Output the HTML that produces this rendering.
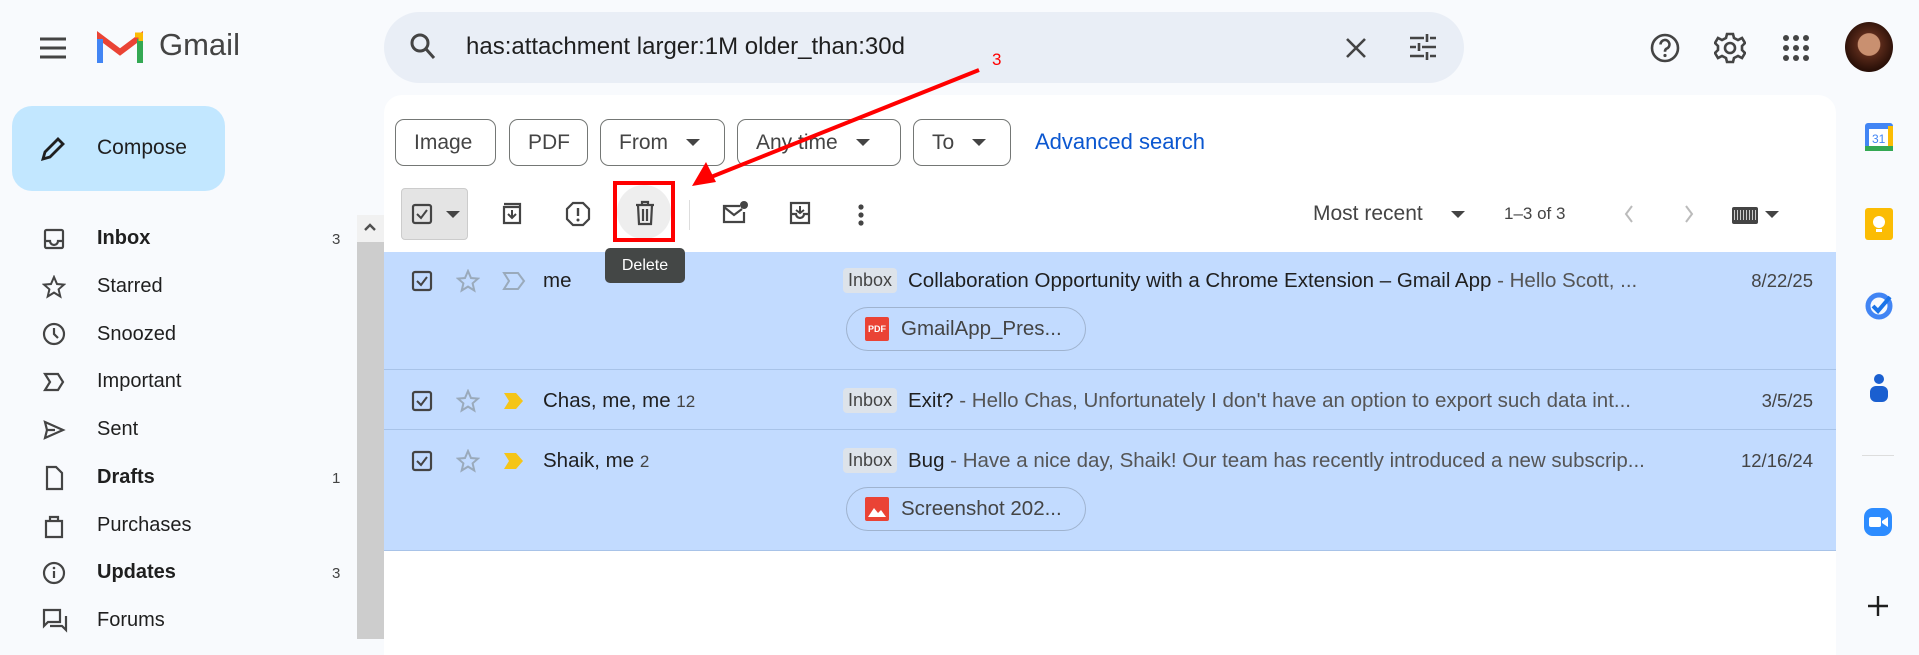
<!DOCTYPE html>
<html><head><meta charset="utf-8"><style>
*{margin:0;padding:0;box-sizing:border-box}
body{width:1919px;height:639px;overflow:hidden;background:#f8fafd;font-family:"Liberation Sans",Arial,sans-serif;color:#1f1f1f;position:relative}
.a{position:absolute}
svg{display:block}
.nav{position:absolute;left:97px;font-size:20px;color:#1f1f1f}
.nav.b{font-weight:bold}
.cnt{position:absolute;left:332px;font-size:15px;color:#444}
.ni{position:absolute;left:42px}
.chip{position:absolute;top:119px;height:47px;border:1px solid #747775;border-radius:9px;font-size:21px;color:#444;display:flex;align-items:center;padding-left:18px;gap:18px}
.tri{width:0;height:0;border-left:7px solid transparent;border-right:7px solid transparent;border-top:7px solid #444}
.row{position:absolute;left:384px;width:1452px;background:#c2dbff;border-bottom:1px solid #a8c3e8}
.t{position:absolute;font-size:20.5px;white-space:nowrap}
.lbl{position:absolute;left:843px;background:#dde3ea;color:#444;font-size:18px;padding:2px 5px;border-radius:4px}
.att{position:absolute;left:846px;width:240px;height:44px;border:1px solid #9fb3cf;border-radius:22px;font-size:20.5px;color:#444;display:flex;align-items:center;padding-left:18px;gap:12px}
</style></head><body>
<svg class="a" style="left:38px;top:36px" width="30" height="24"><path d="M2 3h26M2 12h26M2 21h26" stroke="#444" stroke-width="3"/></svg>
<svg class="a" style="left:97px;top:31px" width="46" height="34" viewBox="0 0 46 34"><path d="M3 32V6l20 15L43 6v26" fill="none" stroke="#ea4335" stroke-width="6"/><path d="M3 32V8" stroke="#4285f4" stroke-width="6"/><path d="M43 32V8" stroke="#34a853" stroke-width="6"/><path d="M38 4l6 0v6" stroke="#fbbc04" stroke-width="5" fill="none"/></svg>
<div class="a" style="left:159px;top:27px;font-size:31px;color:#444">Gmail</div>
<div class="a" style="left:384px;top:12px;width:1080px;height:71px;background:#e9eef6;border-radius:36px"></div>
<svg class="a" style="left:410px;top:33px" width="26" height="28"><circle cx="10" cy="10" r="8" fill="none" stroke="#444" stroke-width="3"/><path d="M16 16l8 9" stroke="#444" stroke-width="3"/></svg>
<div class="a" style="left:466px;top:33px;font-size:24px;color:#1f1f1f">has:attachment larger:1M older_than:30d</div>
<svg class="a" style="left:1344px;top:36px" width="24" height="24"><path d="M3 3l18 18M21 3L3 21" stroke="#444" stroke-width="2.6"/></svg>
<svg class="a" style="left:1408px;top:32px" width="30" height="30"><path d="M2 6h14M22 6h6M19 2v8M2 15h6M14 15h14M11 11v8M2 24h14M22 24h6M19 20v8" stroke="#444" stroke-width="2.6"/></svg>
<svg class="a" style="left:1650px;top:33px" width="30" height="30"><circle cx="15" cy="15" r="13" fill="none" stroke="#444" stroke-width="2.6"/><path d="M10.5 11.5a4.5 4.5 0 1 1 6 4.2c-1.2.6-1.5 1.3-1.5 3" fill="none" stroke="#444" stroke-width="2.6"/><circle cx="15" cy="22.5" r="1.6" fill="#444"/></svg>
<svg class="a" style="left:1714px;top:32px" width="32" height="32" viewBox="0 0 32 32"><path d="M13 2h6l1 4 4 2 4-2 3 5-3 3v4l3 3-3 5-4-2-4 2-1 4h-6l-1-4-4-2-4 2-3-5 3-3v-4l-3-3 3-5 4 2 4-2z" fill="none" stroke="#444" stroke-width="2.6"/><circle cx="16" cy="16" r="5" fill="none" stroke="#444" stroke-width="2.6"/></svg>
<svg class="a" style="left:1782px;top:34px" width="28" height="28"><g fill="#444"><circle cx="4" cy="4" r="3"/><circle cx="14" cy="4" r="3"/><circle cx="24" cy="4" r="3"/><circle cx="4" cy="14" r="3"/><circle cx="14" cy="14" r="3"/><circle cx="24" cy="14" r="3"/><circle cx="4" cy="24" r="3"/><circle cx="14" cy="24" r="3"/><circle cx="24" cy="24" r="3"/></g></svg>
<div class="a" style="left:1845px;top:22px;width:48px;height:50px;border-radius:50%;background:radial-gradient(circle at 50% 45%,#c99070 0 30%,#5a2a1a 32%,#2a1008 70%)"></div>
<div class="a" style="left:12px;top:106px;width:213px;height:85px;background:#c2e7ff;border-radius:20px"></div>
<svg class="a" style="left:38px;top:134px" width="30" height="30"><path d="M5 25l2-7L20 5l5 5-13 13z" fill="none" stroke="#1f1f1f" stroke-width="2.8"/></svg>
<div class="a" style="left:97px;top:136px;font-size:21px;color:#1f1f1f">Compose</div>
<svg class="ni" style="top:227px" width="24" height="24"><rect x="3" y="3" width="18" height="18" rx="1.5" fill="none" stroke="#444" stroke-width="2.2"/><path d="M3 14h5a4 4 0 0 0 8 0h5" fill="none" stroke="#444" stroke-width="2.2"/></svg>
<div class="nav b" style="top:227px">Inbox</div><div class="cnt" style="top:231px">3</div>
<svg class="ni" style="top:275px" width="24" height="24"><path d="M12 2l3 7 7 .6-5.4 4.7 1.7 7.2L12 17.6 5.7 21.5l1.7-7.2L2 9.6 9 9z" fill="none" stroke="#444" stroke-width="2"/></svg>
<div class="nav" style="top:275px">Starred</div>
<svg class="ni" style="top:322px" width="24" height="24"><circle cx="12" cy="12" r="10" fill="none" stroke="#444" stroke-width="2.2"/><path d="M12 6v6l4 4" fill="none" stroke="#444" stroke-width="2.2"/></svg>
<div class="nav" style="top:323px">Snoozed</div>
<svg class="ni" style="top:370px" width="24" height="24"><path d="M3 4h13l5 8-5 8H3l5-8z" fill="none" stroke="#444" stroke-width="2.2"/></svg>
<div class="nav" style="top:370px">Important</div>
<svg class="ni" style="top:418px" width="24" height="24"><path d="M3 4l18 8-18 8 2-8zM5 12h8" fill="none" stroke="#444" stroke-width="2.2"/></svg>
<div class="nav" style="top:418px">Sent</div>
<svg class="ni" style="top:465px" width="24" height="26"><path d="M5 2h9l6 6v16H5z" fill="none" stroke="#444" stroke-width="2.2"/></svg>
<div class="nav b" style="top:466px">Drafts</div><div class="cnt" style="top:470px">1</div>
<svg class="ni" style="top:513px" width="24" height="26"><path d="M4 8h16v16H4zM8 8V4h8v4" fill="none" stroke="#444" stroke-width="2.2"/></svg>
<div class="nav" style="top:514px">Purchases</div>
<svg class="ni" style="top:561px" width="24" height="24"><circle cx="12" cy="12" r="10" fill="none" stroke="#444" stroke-width="2.2"/><path d="M12 10v7" stroke="#444" stroke-width="2.2"/><circle cx="12" cy="7" r="1.3" fill="#444"/></svg>
<div class="nav b" style="top:561px">Updates</div><div class="cnt" style="top:565px">3</div>
<svg class="ni" style="top:608px" width="26" height="28"><path d="M2 2h16v12H6l-4 4zM8 18h12l4 4V8" fill="none" stroke="#444" stroke-width="2.2"/></svg>
<div class="nav" style="top:609px">Forums</div>
<div class="a" style="left:357px;top:215px;width:27px;height:424px;background:#cdcdcd"></div>
<div class="a" style="left:357px;top:215px;width:27px;height:27px;background:#f1f1f1"></div>
<svg class="a" style="left:363px;top:221px" width="14" height="12"><path d="M2 9l5-5 5 5" fill="none" stroke="#505050" stroke-width="2.4"/></svg>
<div class="a" style="left:384px;top:95px;width:1452px;height:560px;background:#fff;border-radius:18px 18px 0 0"></div>
<div class="chip" style="left:395px;width:101px">Image</div>
<div class="chip" style="left:509px;width:79px">PDF</div>
<div class="chip" style="left:600px;width:125px">From <span class="tri"></span></div>
<div class="chip" style="left:737px;width:164px">Any time <span class="tri"></span></div>
<div class="chip" style="left:913px;width:98px">To <span class="tri"></span></div>
<div class="a" style="left:1035px;top:129px;font-size:22px;color:#0b57d0">Advanced search</div>
<div class="a" style="left:401px;top:188px;width:67px;height:52px;background:#e4e4e4;border:1px solid #ccc;border-radius:4px"></div>
<svg class="a" style="left:411px;top:203px" width="22" height="22"><rect x="2" y="2" width="18" height="18" rx="2" fill="none" stroke="#444" stroke-width="2.2"/><path d="M6 11l4 4 6-8" fill="none" stroke="#444" stroke-width="2"/></svg>
<div class="a tri" style="left:446px;top:211px"></div>
<svg class="a" style="left:500px;top:201px" width="24" height="26"><path d="M4 6h16v16H4zM4 3h16v3" fill="none" stroke="#444" stroke-width="2.2"/><path d="M12 9v8M8 13l4 4 4-4" fill="none" stroke="#444" stroke-width="2"/></svg>
<svg class="a" style="left:565px;top:201px" width="26" height="26"><path d="M8 2h10l6 6v10l-6 6H8l-6-6V8z" fill="none" stroke="#444" stroke-width="2.2"/><path d="M13 7v8" stroke="#444" stroke-width="2.4"/><circle cx="13" cy="19" r="1.5" fill="#444"/></svg>
<div class="a" style="left:617px;top:185px;width:54px;height:54px;border-radius:50%;background:#eee"></div>
<svg class="a" style="left:633px;top:200px" width="24" height="26"><path d="M3 5h18M9 5V2h6v3M5 5l1 19h12l1-19M10 9v12M14 9v12" fill="none" stroke="#444" stroke-width="2.2"/></svg>
<div class="a" style="left:613px;top:181px;width:62px;height:61px;border:4px solid #f00"></div>
<div class="a" style="left:689px;top:200px;width:1px;height:30px;background:#ddd"></div>
<svg class="a" style="left:721px;top:200px" width="28" height="26"><path d="M19 6H3v16h20V12" fill="none" stroke="#444" stroke-width="2.2"/><path d="M3 7l10 8 8-6" fill="none" stroke="#444" stroke-width="2.2"/><circle cx="23" cy="5" r="4" fill="#444"/></svg>
<svg class="a" style="left:788px;top:200px" width="24" height="26"><path d="M3 3h18v20H3zM3 14h5a4 4 0 0 0 8 0h5" fill="none" stroke="#444" stroke-width="2.2"/><path d="M12 6v7M8 10l4 3 4-3" fill="none" stroke="#444" stroke-width="2"/></svg>
<svg class="a" style="left:856px;top:203px" width="10" height="24"><circle cx="5" cy="4" r="2.6" fill="#444"/><circle cx="5" cy="12" r="2.6" fill="#444"/><circle cx="5" cy="20" r="2.6" fill="#444"/></svg>
<div class="a" style="left:1313px;top:202px;font-size:21px;color:#444">Most recent</div>
<div class="a tri" style="left:1451px;top:211px"></div>
<div class="a" style="left:1504px;top:204px;font-size:17px;color:#444">1–3 of 3</div>
<svg class="a" style="left:1622px;top:204px" width="14" height="20"><path d="M10 2L4 10l6 8" fill="none" stroke="#bbb" stroke-width="2"/></svg>
<svg class="a" style="left:1682px;top:204px" width="14" height="20"><path d="M4 2l6 8-6 8" fill="none" stroke="#bbb" stroke-width="2"/></svg>
<div class="a" style="left:1732px;top:207px;width:26px;height:17px;background:#444;border-radius:2px;background-image:repeating-linear-gradient(90deg,#444 0 2px,#ccc 2px 3px);background-size:100% 10px;background-repeat:no-repeat;background-position:0 3px"></div>
<div class="a tri" style="left:1765px;top:211px"></div>
<div class="row" style="top:252px;height:118px"></div>
<div class="row" style="top:370px;height:60px"></div>
<div class="row" style="top:430px;height:121px"></div>
<svg class="a" style="left:411px;top:270px" width="22" height="22"><rect x="2" y="2" width="18" height="18" rx="2" fill="none" stroke="#444" stroke-width="2.2"/><path d="M6 11l4 4 6-8" fill="none" stroke="#444" stroke-width="2"/></svg>
<svg class="a" style="left:411px;top:390px" width="22" height="22"><rect x="2" y="2" width="18" height="18" rx="2" fill="none" stroke="#444" stroke-width="2.2"/><path d="M6 11l4 4 6-8" fill="none" stroke="#444" stroke-width="2"/></svg>
<svg class="a" style="left:411px;top:450px" width="22" height="22"><rect x="2" y="2" width="18" height="18" rx="2" fill="none" stroke="#444" stroke-width="2.2"/><path d="M6 11l4 4 6-8" fill="none" stroke="#444" stroke-width="2"/></svg>
<svg class="a" style="left:456px;top:269px" width="24" height="24"><path d="M12 2l3 7 7 .6-5.4 4.7 1.7 7.2L12 17.6 5.7 21.5l1.7-7.2L2 9.6 9 9z" fill="none" stroke="#9aaabb" stroke-width="2"/></svg>
<svg class="a" style="left:456px;top:389px" width="24" height="24"><path d="M12 2l3 7 7 .6-5.4 4.7 1.7 7.2L12 17.6 5.7 21.5l1.7-7.2L2 9.6 9 9z" fill="none" stroke="#9aaabb" stroke-width="2"/></svg>
<svg class="a" style="left:456px;top:449px" width="24" height="24"><path d="M12 2l3 7 7 .6-5.4 4.7 1.7 7.2L12 17.6 5.7 21.5l1.7-7.2L2 9.6 9 9z" fill="none" stroke="#9aaabb" stroke-width="2"/></svg>
<svg class="a" style="left:502px;top:271px" width="24" height="20"><path d="M2 2h14l6 8-6 8H2l5-8z" fill="none" stroke="#9aaabb" stroke-width="2"/></svg>
<svg class="a" style="left:502px;top:391px" width="24" height="20"><path d="M2 2h12l7 8-7 8H2l5-8z" fill="#f5c518"/></svg>
<svg class="a" style="left:502px;top:451px" width="24" height="20"><path d="M2 2h12l7 8-7 8H2l5-8z" fill="#f5c518"/></svg>
<div class="t" style="left:543px;top:269px">me</div>
<div class="t" style="left:543px;top:389px">Chas, me, me <span style="font-size:17px;color:#444">12</span></div>
<div class="t" style="left:543px;top:449px">Shaik, me <span style="font-size:17px;color:#444">2</span></div>
<div class="lbl" style="top:268px">Inbox</div>
<div class="lbl" style="top:388px">Inbox</div>
<div class="lbl" style="top:448px">Inbox</div>
<div class="t" style="left:908px;top:269px">Collaboration Opportunity with a Chrome Extension – Gmail App <span style="color:#555">- Hello Scott, ...</span></div>
<div class="t" style="left:908px;top:389px">Exit? <span style="color:#555">- Hello Chas, Unfortunately I don't have an option to export such data int...</span></div>
<div class="t" style="left:908px;top:449px">Bug <span style="color:#555">- Have a nice day, Shaik! Our team has recently introduced a new subscrip...</span></div>
<div class="t" style="right:106px;top:270px;font-size:18.5px;color:#444">8/22/25</div>
<div class="t" style="right:106px;top:390px;font-size:18.5px;color:#444">3/5/25</div>
<div class="t" style="right:106px;top:450px;font-size:18.5px;color:#444">12/16/24</div>
<div class="att" style="top:307px"><span style="width:24px;height:24px;background:#ea4335;color:#fff;font-size:9px;font-weight:bold;display:flex;align-items:center;justify-content:center;border-radius:2px">PDF</span>GmailApp_Pres...</div>
<div class="att" style="top:487px"><svg width="24" height="24"><rect width="24" height="24" rx="2" fill="#ea4335"/><path d="M3 20l6-9 4 5 3-3 5 7z" fill="#fff"/></svg>Screenshot 202...</div>
<div class="a" style="left:605px;top:248px;width:80px;height:35px;background:#444746;border-radius:5px;color:#fff;font-size:16px;display:flex;align-items:center;justify-content:center">Delete</div>
<svg class="a" style="left:680px;top:55px" width="320" height="140"><path d="M299 15L26 124" stroke="#f00" stroke-width="4"/><path d="M12 131l14-24 10 20z" fill="#f00"/></svg>
<div class="a" style="left:992px;top:50px;font-size:17px;color:#f00">3</div>
<svg class="a" style="left:1864px;top:122px" width="30" height="30"><rect x="1" y="1" width="28" height="28" rx="3" fill="#4285f4"/><rect x="5" y="7" width="20" height="17" fill="#fff"/><rect x="1" y="24" width="28" height="5" fill="#34a853"/><rect x="24" y="4" width="5" height="20" fill="#fbbc04"/><text x="8" y="21" font-size="12" fill="#4285f4" font-family="Liberation Sans">31</text></svg>
<svg class="a" style="left:1864px;top:207px" width="30" height="34"><rect x="1" y="1" width="28" height="32" rx="3" fill="#fbbc04"/><circle cx="15" cy="15" r="6" fill="#fff"/><rect x="12" y="22" width="6" height="3" fill="#fff"/></svg>
<svg class="a" style="left:1864px;top:290px" width="30" height="30"><circle cx="15" cy="16" r="11" fill="none" stroke="#4285f4" stroke-width="5"/><path d="M9 16l5 5 12-14" fill="none" stroke="#1a73e8" stroke-width="4"/></svg>
<svg class="a" style="left:1866px;top:373px" width="26" height="30"><circle cx="13" cy="6" r="5" fill="#1a5fd0"/><rect x="4" y="13" width="18" height="16" rx="6" fill="#1a5fd0"/></svg>
<div class="a" style="left:1862px;top:455px;width:32px;height:1px;background:#ddd"></div>
<svg class="a" style="left:1863px;top:507px" width="30" height="30"><rect x="1" y="1" width="28" height="28" rx="9" fill="#2d8cff"/><rect x="6" y="10" width="12" height="10" rx="2" fill="#fff"/><path d="M19 14l6-4v10l-6-4z" fill="#fff"/></svg>
<svg class="a" style="left:1866px;top:594px" width="24" height="24"><path d="M12 2v20M2 12h20" stroke="#1f1f1f" stroke-width="2.4"/></svg>
</body></html>
